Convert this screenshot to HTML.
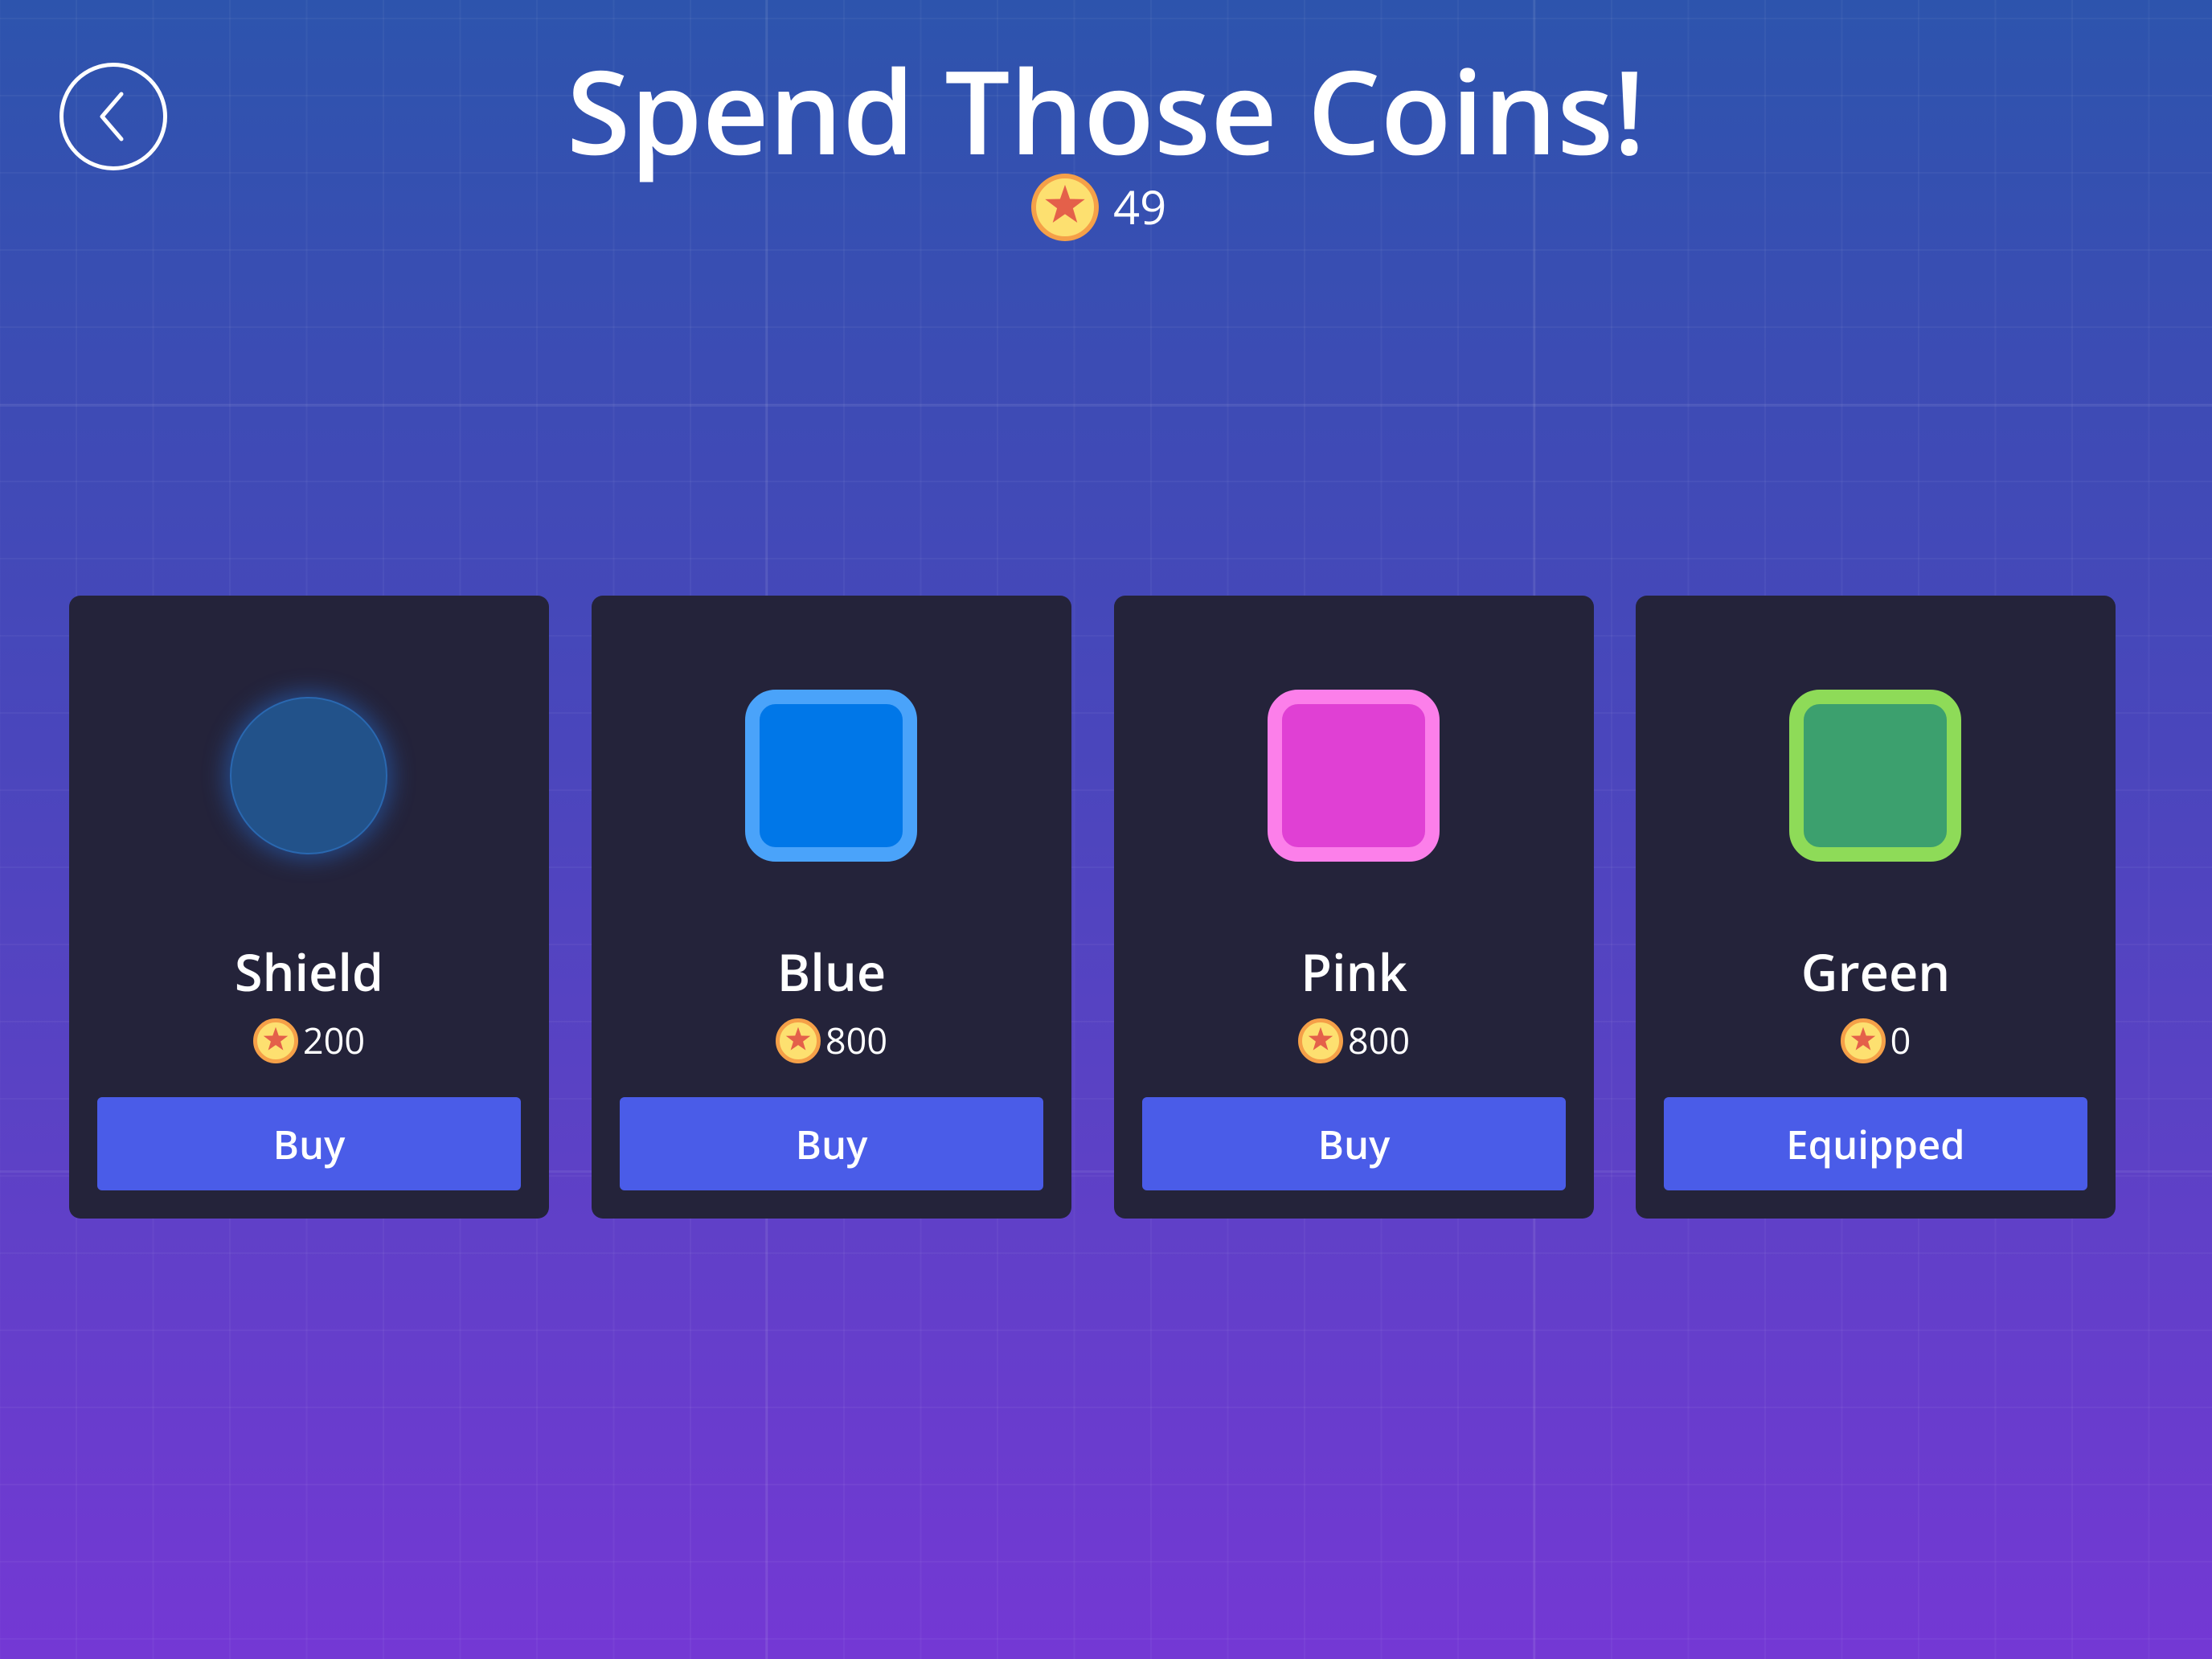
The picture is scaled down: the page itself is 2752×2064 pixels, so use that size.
<!DOCTYPE html>
<html><head><meta charset="utf-8"><style>
*{margin:0;padding:0;box-sizing:border-box}
html,body{width:2752px;height:2064px;overflow:hidden}
body{position:relative;font-family:"Open Sans","Liberation Sans","DejaVu Sans",sans-serif;color:#fff;
background:linear-gradient(180deg,#2d54ad 0%,#3e4bb5 25%,#4a46bc 45%,#5d41c6 70%,#7438d4 100%);}
.grid{position:absolute;inset:0;
background-image:linear-gradient(90deg,rgba(255,255,255,0.04) 2px,transparent 2px),linear-gradient(0deg,rgba(255,255,255,0.04) 2px,transparent 2px);
background-size:95.5px 96px;background-position:94px 24px;}
.major{position:absolute;background:rgba(255,255,255,0.07)}
.back{position:absolute;left:74px;top:78px;width:134px;height:134px;border:5px solid #fff;border-radius:50%}
h1{position:absolute;left:0;width:2752px;top:42px;text-align:center;font-size:144px;font-weight:600;line-height:190px;letter-spacing:0}
.coin{position:absolute;border-radius:50%;background:#fde070;border:solid #f5a048}
.coin svg{position:absolute;left:50%;top:50%;transform:translate(-50%,-54%)}
.bal{position:absolute;left:1385px;top:222px;font-size:58px;line-height:70px;font-weight:500}
.card{position:absolute;top:741px;width:597px;height:775px;background:#24233a;border-radius:14px}
.sq{position:absolute;left:191px;top:117px;width:214px;height:214px;border-radius:38px;border:18px solid}
.name{position:absolute;left:0;width:100%;text-align:center;font-size:63px;line-height:80px;font-weight:600}
.price{position:absolute;left:0;width:100%;text-align:center;font-size:45px;line-height:60px;font-weight:500}
.price span{display:inline-block;vertical-align:middle}
.pc{position:relative;display:inline-block;width:56px;height:56px;border-radius:50%;background:#fde070;border:5px solid #f5a048;margin-right:6px}
.pc svg{position:absolute;left:50%;top:50%;transform:translate(-50%,-54%)}
.btn{position:absolute;left:35px;top:624px;width:527px;height:116px;background:#4a5ce8;border-radius:6px;text-align:center;font-size:49px;line-height:118px;font-weight:600}
</style></head><body>
<div class="grid"></div>
<div class="major" style="left:952px;top:0;width:3px;height:2064px"></div>
<div class="major" style="left:1907px;top:0;width:3px;height:2064px"></div>
<div class="major" style="left:0;top:503px;width:2752px;height:3px"></div>
<div class="major" style="left:0;top:1456px;width:2752px;height:3px"></div>

<div class="back"><svg width="124" height="124" viewBox="0 0 124 124" style="position:absolute;left:0;top:0"><polyline points="72,34 48,62 72,90" fill="none" stroke="#fff" stroke-width="5" stroke-linecap="round" stroke-linejoin="round"/></svg></div>
<h1>Spend Those Coins!</h1>
<div class="coin" style="left:1283px;top:216px;width:84px;height:84px;border-width:6px"><svg width="52" height="52" viewBox="-1 -1 2 2"><polygon fill="#e4604a" points="0,-1 0.235,-0.324 0.951,-0.309 0.38,0.124 0.588,0.809 0,0.4 -0.588,0.809 -0.38,0.124 -0.951,-0.309 -0.235,-0.324"/></svg></div>
<div class="bal">49</div>

<div class="card" style="left:86px"><div style="position:absolute;left:200px;top:126px;width:196px;height:196px;border-radius:50%;background:#22528a;border:2px solid #2a68b0;box-shadow:0 0 28px 6px rgba(40,120,230,0.45)"></div>
<div class="name" style="top:429px">Shield</div>
<div class="price" style="top:520px"><span class="pc"><svg width="32" height="32" viewBox="-1 -1 2 2"><polygon fill="#e4604a" points="0,-1 0.235,-0.324 0.951,-0.309 0.38,0.124 0.588,0.809 0,0.4 -0.588,0.809 -0.38,0.124 -0.951,-0.309 -0.235,-0.324"/></svg></span><span>200</span></div>
<div class="btn">Buy</div></div>

<div class="card" style="left:736px"><div class="sq" style="background:#0077e8;border-color:#4aa3fa"></div>
<div class="name" style="top:429px">Blue</div>
<div class="price" style="top:520px"><span class="pc"><svg width="32" height="32" viewBox="-1 -1 2 2"><polygon fill="#e4604a" points="0,-1 0.235,-0.324 0.951,-0.309 0.38,0.124 0.588,0.809 0,0.4 -0.588,0.809 -0.38,0.124 -0.951,-0.309 -0.235,-0.324"/></svg></span><span>800</span></div>
<div class="btn">Buy</div></div>

<div class="card" style="left:1386px"><div class="sq" style="background:#e040d4;border-color:#fc7fea"></div>
<div class="name" style="top:429px">Pink</div>
<div class="price" style="top:520px"><span class="pc"><svg width="32" height="32" viewBox="-1 -1 2 2"><polygon fill="#e4604a" points="0,-1 0.235,-0.324 0.951,-0.309 0.38,0.124 0.588,0.809 0,0.4 -0.588,0.809 -0.38,0.124 -0.951,-0.309 -0.235,-0.324"/></svg></span><span>800</span></div>
<div class="btn">Buy</div></div>

<div class="card" style="left:2035px"><div class="sq" style="background:#3ca06e;border-color:#8edb58"></div>
<div class="name" style="top:429px">Green</div>
<div class="price" style="top:520px"><span class="pc"><svg width="32" height="32" viewBox="-1 -1 2 2"><polygon fill="#e4604a" points="0,-1 0.235,-0.324 0.951,-0.309 0.38,0.124 0.588,0.809 0,0.4 -0.588,0.809 -0.38,0.124 -0.951,-0.309 -0.235,-0.324"/></svg></span><span>0</span></div>
<div class="btn">Equipped</div></div>
</body></html>
